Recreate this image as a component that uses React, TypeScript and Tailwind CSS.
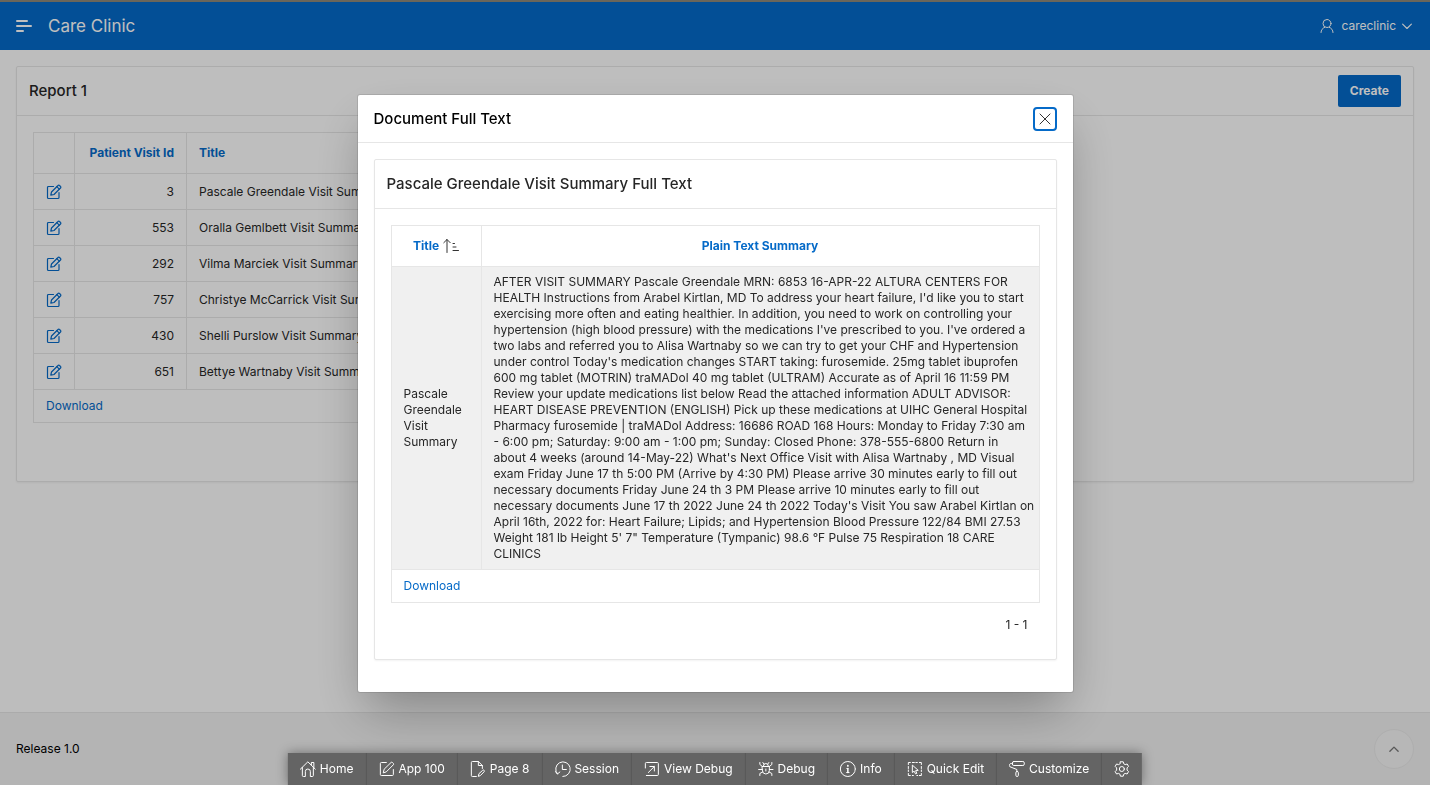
import React from "react";

const visits = [
  { id: 3, title: "Pascale Greendale Visit Summary" },
  { id: 553, title: "Oralla Gemlbett Visit Summary" },
  { id: 292, title: "Vilma Marciek Visit Summary" },
  { id: 757, title: "Christye McCarrick Visit Summary" },
  { id: 430, title: "Shelli Purslow Visit Summary" },
  { id: 651, title: "Bettye Wartnaby Visit Summary" },
];

const summaryLines = [
  "AFTER VISIT SUMMARY Pascale Greendale MRN: 6853 16-APR-22 ALTURA CENTERS FOR",
  "HEALTH Instructions from Arabel Kirtlan, MD To address your heart failure, I'd like you to start",
  "exercising more often and eating healthier. In addition, you need to work on controlling your",
  "hypertension (high blood pressure) with the medications I've prescribed to you. I've ordered a",
  "two labs and referred you to Alisa Wartnaby so we can try to get your CHF and Hypertension",
  "under control Today's medication changes START taking: furosemide. 25mg tablet ibuprofen",
  "600 mg tablet (MOTRIN) traMADol 40 mg tablet (ULTRAM) Accurate as of April 16 11:59 PM",
  "Review your update medications list below Read the attached information ADULT ADVISOR:",
  "HEART DISEASE PREVENTION (ENGLISH) Pick up these medications at UIHC General Hospital",
  "Pharmacy furosemide | traMADol Address: 16686 ROAD 168 Hours: Monday to Friday 7:30 am",
  "- 6:00 pm; Saturday: 9:00 am - 1:00 pm; Sunday: Closed Phone: 378-555-6800 Return in",
  "about 4 weeks (around 14-May-22) What's Next Office Visit with Alisa Wartnaby , MD Visual",
  "exam Friday June 17 th 5:00 PM (Arrive by 4:30 PM) Please arrive 30 minutes early to fill out",
  "necessary documents Friday June 24 th 3 PM Please arrive 10 minutes early to fill out",
  "necessary documents June 17 th 2022 June 24 th 2022 Today's Visit You saw Arabel Kirtlan on",
  "April 16th, 2022 for: Heart Failure; Lipids; and Hypertension Blood Pressure 122/84 BMI 27.53",
  "Weight 181 lb Height 5' 7\" Temperature (Tympanic) 98.6 °F Pulse 75 Respiration 18 CARE",
  "CLINICS",
];

function Icon({ children, className = "size-4" }: { children: React.ReactNode; className?: string }) {
  return (
    <svg
      viewBox="0 0 16 16"
      className={className}
      fill="none"
      stroke="currentColor"
      strokeWidth="1"
      strokeLinecap="round"
      strokeLinejoin="round"
      aria-hidden="true"
    >
      {children}
    </svg>
  );
}

const editShape = (
  <g strokeWidth="1.2">
    <path d="M7.500 2.500h-5a1 1 0 0 0-1 1v10a1 1 0 0 0 1 1h9.500a1 1 0 0 0 1-1v-5" />
    <path d="M4.800 11.200l.7-3.200 6.500-6.500a1 1 0 0 1 1.500 0l1 1a1 1 0 0 1 0 1.500L8 10.500z" />
    <path d="M10.800 2.700l2.500 2.500" />
  </g>
);

const tools = [
  {
    label: "Home",
    icon: (
      <>
        <path d="M.5 8.200L8 .8l7.500 7.400" />
        <path d="M11.500 4V1.500h2.500V6.500" />
        <path d="M2.500 6.500v8a1 1 0 0 0 1 1h2v-5a2.500 2.500 0 0 1 5 0v5h2a1 1 0 0 0 1-1v-8" />
      </>
    ),
  },
  {
    label: "App 100",
    icon: (
      <>
        <path d="M7.500 1.500h-5a1 1 0 0 0-1 1v11a1 1 0 0 0 1 1h11a1 1 0 0 0 1-1v-5" />
        <path d="M4.500 11.500l.8-3.300 6.900-6.700a1 1 0 0 1 1.400 0l.9.900a1 1 0 0 1 0 1.400L7.700 10.600z" />
      </>
    ),
  },
  {
    label: "Page 8",
    icon: (
      <>
        <path d="M6.500 15.500h-4a1 1 0 0 1-1-1v-13a1 1 0 0 1 1-1h6l4 4v3" />
        <path d="M8.500 .5v4h4" />
        <path d="M8.500 15l.6-2.300 3.700-3.400a1 1 0 0 1 1.400 0 1 1 0 0 1 0 1.500l-3.500 3.600z" />
      </>
    ),
  },
  {
    label: "Session",
    icon: (
      <>
        <path d="M2.600 13A7.300 7.300 0 1 1 8 15.500" />
        <path d="M.5 10.500l2 2.500 2.500-2" />
        <path d="M7.500 4v4.500h4" />
      </>
    ),
  },
  {
    label: "View Debug",
    icon: (
      <>
        <path d="M1.500 7V2.500a1 1 0 0 1 1-1h11a1 1 0 0 1 1 1v11a1 1 0 0 1-1 1h-11" />
        <path d="M4.500 11.500l6-6M6 5.500h4.500V10" />
      </>
    ),
  },
  {
    label: "Debug",
    icon: (
      <>
        <path d="M5.500 5a2.500 2.500 0 0 1 5 0M4.500 5.500h7v4a3.500 3.500 0 0 1-7 0z" />
        <path d="M2 1.500v2l2.500 2M14 1.500v2l-2.500 2M.8 8.500h3.700M11.500 8.500h3.700M2 14.500v-2l2.700-1.500M14 14.500v-2l-2.700-1.500M8 8v2" />
        <path d="M5 1.500l1.200 1.700M11 1.500L9.800 3.200" />
      </>
    ),
  },
  {
    label: "Info",
    icon: (
      <>
        <circle cx="8" cy="8" r="7.5" />
        <path d="M8 7.500v4" strokeWidth="1.500" />
        <path d="M7 7.500h1M6.800 11.500h2.400" />
        <path d="M8 4.700v.2" strokeWidth="1.800" />
      </>
    ),
  },
  {
    label: "Quick Edit",
    icon: (
      <>
        <path d="M1.500 3.500v-2h2M12.500 1.500h2v2M14.500 12.500v2h-2M3.500 14.500h-2v-2M5.500 1.500h2M9 1.500h1.500M1.500 5.500v2M1.500 9v1.500M14.500 5.500v2M14.500 9v1.500M5.500 14.500h1M10 14.500h.8" />
        <path d="M5.500 4.500v7l1.800-1.300 1.400 2.700 1.300-.6-1.300-2.600 2.300-.3z" />
      </>
    ),
  },
  {
    label: "Customize",
    icon: (
      <>
        <rect x="3.500" y=".5" width="12" height="4" rx="1.500" />
        <path d="M3.500 2.500h-1a1.900 1.900 0 0 0-1.500 3.200l7 2.800v2" />
        <rect x="7" y="10.500" width="2.500" height="5" rx="1.200" />
      </>
    ),
  },
  {
    label: "",
    icon: (
      <>
        <path d="M6.600.8h2.800l.5 2 1.400.8 2-.6 1.400 2.400-1.500 1.500v2.200l1.500 1.500-1.400 2.400-2-.6-1.400.8-.5 2H6.600l-.5-2-1.400-.8-2 .6-1.400-2.400 1.500-1.500V6.900L1.300 5.400 2.700 3l2 .6 1.400-.8z" />
        <circle cx="8" cy="8" r="2.500" />
      </>
    ),
  },
];

function Dialog() {
  return (
    <div className="fixed inset-0 flex items-center justify-center bg-black/25 pt-0.5">
      <section
        role="dialog"
        aria-modal="true"
        aria-labelledby="dialog-title"
        className="w-1/2 rounded-xs bg-white shadow-[0_0_0_1px_rgba(0,0,0,0.1),0_24px_48px_-8px_rgba(0,0,0,0.3)]"
      >
        <header className="flex h-12 items-center justify-between border-b border-[#e6e6e6] px-4">
          <h1 id="dialog-title" className="text-[15px] font-medium text-black">
            Document Full Text
          </h1>
          <button
            type="button"
            aria-label="Close"
            className="flex size-6 items-center justify-center rounded-sm border-2 border-[#056ac8] text-[#333]"
          >
            <Icon>
              <path d="M3 3l10 10M13 3L3 13" />
            </Icon>
          </button>
        </header>
        <div className="px-4 pt-4 pb-8">
          <section className="rounded-xs border border-[#e6e6e6] shadow-xs">
            <h2 className="flex h-[49px] items-center border-b border-[#e6e6e6] px-3 text-[15px] font-medium text-[#262626]">
              Pascale Greendale Visit Summary Full Text
            </h2>
            <div className="p-4 pb-[26px]">
              <table className="w-full border-collapse border border-[#e6e6e6] text-xs text-[#262626]">
                <thead>
                  <tr className="h-[41px] text-[#056ac8]">
                    <th className="w-[90px] border border-[#e6e6e6] font-bold">
                      <span className="flex items-center justify-center gap-1">
                        Title
                        <Icon className="size-4 text-[#333]">
                          <path d="M4 14.500V1.500M.8 4.700L4 1.500l3.200 3.200M10 5.500h1.500M10 9h3M10 12.500h5.500" />
                        </Icon>
                      </span>
                    </th>
                    <th className="border border-[#e6e6e6] font-bold">Plain Text Summary</th>
                  </tr>
                </thead>
                <tbody>
                  <tr className="bg-[#f0f0f0]">
                    <td className="border border-[#e6e6e6] px-3 py-[7px]">Pascale Greendale Visit Summary</td>
                    <td className="border border-[#e6e6e6] py-[7px] pr-1 pl-3">
                      {summaryLines.map((line) => (
                        <span key={line} className="block">
                          {line}{" "}
                        </span>
                      ))}
                    </td>
                  </tr>
                </tbody>
                <tfoot>
                  <tr className="h-[33px]">
                    <td colSpan={2} className="px-3">
                      <a href="#download" className="text-[#056ac8]">
                        Download
                      </a>
                    </td>
                  </tr>
                </tfoot>
              </table>
              <p className="px-3 pt-3.5 text-right text-xs text-[#262626]">1 - 1</p>
            </div>
          </section>
        </div>
      </section>
    </div>
  );
}

export default function App() {
  return (
    <div className="flex min-h-screen flex-col bg-[#fcfcfc] font-[Inter,sans-serif] text-xs text-[#262626]">
      <header className="flex h-[50px] items-center justify-between border-t-2 border-[#8f8878] bg-[#056ac8] px-4 text-white">
        <div className="flex items-center gap-4">
          <button type="button" aria-label="Main navigation" className="flex w-4 flex-col gap-[3px]">
            <span className="h-0.5 w-3 rounded-full bg-white" />
            <span className="h-0.5 w-4 rounded-full bg-white" />
            <span className="h-0.5 w-2 rounded-full bg-white" />
          </button>
          <a href="#home" className="text-[17px]">
            Care Clinic
          </a>
        </div>
        <button type="button" className="flex items-center gap-1.5 pr-0.5">
          <Icon>
            <circle cx="8" cy="5.500" r="4" />
            <path d="M2 14.500c0-2.500 1.500-4.300 3.700-5.200M14 14.500c0-2.500-1.500-4.300-3.700-5.200" />
          </Icon>
          careclinic
          <Icon className="size-2.5">
            <path d="M1 5l7 7 7-7" strokeWidth="1.800" />
          </Icon>
        </button>
      </header>

      <main className="flex-1 p-4">
        <section className="rounded-xs border border-[#e6e6e6] bg-[#fefefe] shadow-xs">
          <header className="flex h-[49px] items-center justify-between border-b border-[#e6e6e6] px-3">
            <h2 className="text-[15px] font-medium">Report 1</h2>
            <button type="button" className="h-8 rounded-xs bg-[#056ac8] px-3 font-bold text-white">
              Create
            </button>
          </header>
          <div className="p-4 pb-[58px]">
            <table className="w-2/3 border-collapse border border-[#e6e6e6]">
              <thead>
                <tr className="h-[41px] text-[#056ac8]">
                  <th aria-label="Edit" className="w-[41px] border border-[#e6e6e6]" />
                  <th className="w-28 border border-[#e6e6e6] px-3 text-right font-bold whitespace-nowrap">
                    Patient Visit Id
                  </th>
                  <th className="border border-[#e6e6e6] px-3 text-left font-bold">Title</th>
                </tr>
              </thead>
              <tbody>
                {visits.map((visit) => (
                  <tr key={visit.id} className="h-9">
                    <td className="border border-[#e6e6e6] px-3">
                      <a href="#edit" aria-label="Edit visit" className="block text-[#056ac8]">
                        <Icon>{editShape}</Icon>
                      </a>
                    </td>
                    <td className="border border-[#e6e6e6] px-3 text-right">{visit.id}</td>
                    <td className="border border-[#e6e6e6] px-3">{visit.title}</td>
                  </tr>
                ))}
              </tbody>
              <tfoot>
                <tr className="h-[33px]">
                  <td colSpan={3} className="px-3">
                    <a href="#download-report" className="text-[#056ac8]">
                      Download
                    </a>
                  </td>
                </tr>
              </tfoot>
            </table>
          </div>
        </section>
      </main>

      <footer className="flex h-[73px] items-center justify-between border-t border-[#e4e4e4] bg-[#f0f0f0] px-4 text-black">
        <span>Release 1.0</span>
        <button
          type="button"
          aria-label="Start of page"
          className="flex size-10 items-center justify-center rounded-full border border-[#e9e9e9] bg-[#f4f4f4] text-[#777]"
        >
          <Icon className="size-3">
            <path d="M2.500 11L8 5.500l5.500 5.500" strokeWidth="1.800" />
          </Icon>
        </button>
      </footer>

      <Dialog />

      <nav
        aria-label="Developer toolbar"
        className="fixed bottom-0 left-1/2 flex -translate-x-1/2 divide-x divide-[#585858] bg-[#646464] text-white shadow-[0_0_12px_rgba(0,0,0,0.4)]"
      >
        {tools.map((tool) => (
          <button
            key={tool.label}
            type="button"
            aria-label={tool.label || "Settings"}
            className="flex h-8 items-center gap-1 px-3 whitespace-nowrap"
          >
            <Icon>{tool.icon}</Icon>
            {tool.label}
          </button>
        ))}
      </nav>
    </div>
  );
}
